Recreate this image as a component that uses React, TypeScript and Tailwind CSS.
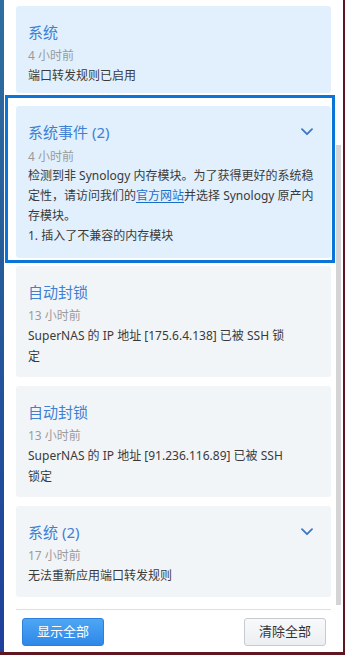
import React from 'react';

type Note = {
  title: string;
  time: string;
  lines: React.ReactNode[];
  expandable?: boolean;
};

const Chevron = () => (
  <svg width="12" height="8" viewBox="0 0 12 8" className="mr-[8px] shrink-0">
    <path d="M1 1.2 L6 6.2 L11 1.2" fill="none" stroke="#3a78c9" strokeWidth="1.8" strokeLinecap="round" strokeLinejoin="round" />
  </svg>
);

const Card: React.FC<{
  note: Note;
  tone: 'blue' | 'gray';
  leading: string;
  timeGap: string;
  bottom: string;
}> = ({ note, tone, leading, timeGap, bottom }) => (
  <div
    className={`w-[315px] rounded-[3px] pt-[16px] pl-[12px] pr-[10px] ${bottom} ${
      tone === 'blue' ? 'bg-[#e1f0fc]' : 'bg-[#f2f5f8]'
    }`}
  >
    <div className="flex h-[20px] items-center justify-between">
      <span className="text-[15px] leading-[20px] text-[#3f80d3]">{note.title}</span>
      {note.expandable && <Chevron />}
    </div>
    <div className={`${timeGap} text-[12px] leading-[18px] text-[#9b9b9b]`}>{note.time}</div>
    <div className={`whitespace-nowrap text-[12px] ${leading} text-[#3a3a3a]`}>
      {note.lines.map((l, i) => (
        <div key={i}>{l}</div>
      ))}
    </div>
  </div>
);

export default function App() {
  const first: Note = { title: '系统', time: '4 小时前', lines: ['端口转发规则已启用'] };
  const focused: Note = {
    title: '系统事件 (2)',
    time: '4 小时前',
    expandable: true,
    lines: [
      '检测到非 Synology 内存模块。为了获得更好的系统稳',
      <>
        定性，请访问我们的
        <span className="text-[#1b6ec6] underline underline-offset-2">官方网站</span>
        并选择 Synology 原产内
      </>,
      '存模块。',
      '1. 插入了不兼容的内存模块',
    ],
  };
  const block1: Note = {
    title: '自动封锁',
    time: '13 小时前',
    lines: ['SuperNAS 的 IP 地址 [175.6.4.138] 已被 SSH 锁', '定'],
  };
  const block2: Note = {
    title: '自动封锁',
    time: '13 小时前',
    lines: ['SuperNAS 的 IP 地址 [91.236.116.89] 已被 SSH', '锁定'],
  };
  const last: Note = {
    title: '系统 (2)',
    time: '17 小时前',
    expandable: true,
    lines: ['无法重新应用端口转发规则'],
  };

  return (
    <div className="flex h-[655px] w-[345px] flex-col overflow-hidden bg-white font-['Noto_Sans','Noto_Sans_CJK_SC',sans-serif]">
      <div className="flex h-[652px]">
        {/* desktop edge on the left */}
        <div className="w-[4px] bg-gradient-to-b from-[#2f6fa0] via-[#25579a] to-[#1f3f9c]" />

        <div className="flex flex-1 flex-col">
          <div className="flex h-[605px] overflow-hidden">
            {/* notification list */}
            <div className="flex flex-1 flex-col pt-[6px] pl-[1px]">
              <div className="ml-[11px]">
                <Card note={first} tone="blue" leading="leading-[21px]" timeGap="mt-[5px]" bottom="pb-[7px]" />
              </div>

              <div className="mt-[2px] w-[330px] border-[3px] border-[#0a74d8] pt-[8px] pl-[8px] pr-[1px] pb-[2px]">
                <Card note={focused} tone="blue" leading="leading-[20px]" timeGap="mt-[6px]" bottom="pb-[12px]" />
              </div>

              <div className="mt-[3px] ml-[11px] flex flex-col gap-[9px]">
                <Card note={block1} tone="gray" leading="leading-[21px]" timeGap="mt-[5px]" bottom="pb-[10px]" />
                <Card note={block2} tone="gray" leading="leading-[21px]" timeGap="mt-[5px]" bottom="pb-[10px]" />
                <Card note={last} tone="gray" leading="leading-[21px]" timeGap="mt-[5px]" bottom="pb-[11px]" />
              </div>
            </div>

            {/* scrollbar */}
            <div className="w-[7px]">
              <div className="mt-[145px] h-[460px] w-[5px] bg-[#d4d4d4]" />
            </div>
          </div>

          {/* footer */}
          <div className="pt-[4px]">
            <div className="ml-[12px] h-px w-[315px] bg-[#dde0e4]" />
            <div className="mt-[8px] flex items-center justify-between pl-[18px] pr-[17px]">
              <button className="h-[28px] w-[82px] rounded-[3px] border border-[#2a80da] bg-gradient-to-b from-[#4ea6f4] to-[#2d88e8] text-[13px] text-white">
                显示全部
              </button>
              <button className="h-[28px] w-[82px] rounded-[3px] border border-[#c6cbd1] bg-gradient-to-b from-[#f8f9fa] to-[#eceff2] text-[13px] text-[#333]">
                清除全部
              </button>
            </div>
          </div>
        </div>

        {/* window edge on the right */}
        <div className="w-[2px] bg-[#5e1620]" />
      </div>
      <div className="h-[3px] bg-[#5e1620]" />
    </div>
  );
}
